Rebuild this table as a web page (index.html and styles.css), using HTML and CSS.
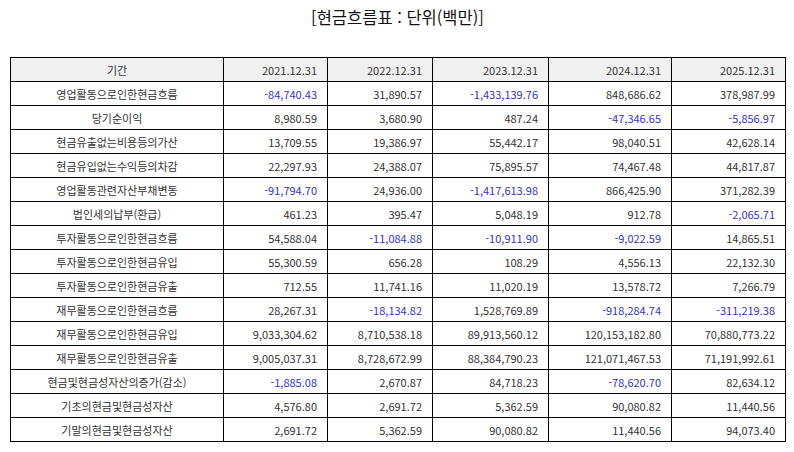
FILE: index.html
```html
<!DOCTYPE html>
<html lang="ko">
<head>
<meta charset="utf-8">
<title>현금흐름표</title>
<link rel="stylesheet" href="styles.css">
</head>
<body>
<div class="page">
  <h1 class="title">[현금흐름표 : 단위(백만)]</h1>
  <table class="cf">
    <colgroup>
      <col class="c0"><col class="c1"><col class="c2"><col class="c3"><col class="c4"><col class="c5">
    </colgroup>
    <thead>
      <tr><th class="label">기간</th><th>2021.12.31</th><th>2022.12.31</th><th>2023.12.31</th><th>2024.12.31</th><th>2025.12.31</th></tr>
    </thead>
    <tbody>
      <tr><td class="label">영업활동으로인한현금흐름</td><td class="neg">-84,740.43</td><td>31,890.57</td><td class="neg">-1,433,139.76</td><td>848,686.62</td><td>378,987.99</td></tr>
      <tr><td class="label">당기순이익</td><td>8,980.59</td><td>3,680.90</td><td>487.24</td><td class="neg">-47,346.65</td><td class="neg">-5,856.97</td></tr>
      <tr><td class="label">현금유출없는비용등의가산</td><td>13,709.55</td><td>19,386.97</td><td>55,442.17</td><td>98,040.51</td><td>42,628.14</td></tr>
      <tr><td class="label">현금유입없는수익등의차감</td><td>22,297.93</td><td>24,388.07</td><td>75,895.57</td><td>74,467.48</td><td>44,817.87</td></tr>
      <tr><td class="label">영업활동관련자산부채변동</td><td class="neg">-91,794.70</td><td>24,936.00</td><td class="neg">-1,417,613.98</td><td>866,425.90</td><td>371,282.39</td></tr>
      <tr><td class="label">법인세의납부(환급)</td><td>461.23</td><td>395.47</td><td>5,048.19</td><td>912.78</td><td class="neg">-2,065.71</td></tr>
      <tr><td class="label">투자활동으로인한현금흐름</td><td>54,588.04</td><td class="neg">-11,084.88</td><td class="neg">-10,911.90</td><td class="neg">-9,022.59</td><td>14,865.51</td></tr>
      <tr><td class="label">투자활동으로인한현금유입</td><td>55,300.59</td><td>656.28</td><td>108.29</td><td>4,556.13</td><td>22,132.30</td></tr>
      <tr><td class="label">투자활동으로인한현금유출</td><td>712.55</td><td>11,741.16</td><td>11,020.19</td><td>13,578.72</td><td>7,266.79</td></tr>
      <tr><td class="label">재무활동으로인한현금흐름</td><td>28,267.31</td><td class="neg">-18,134.82</td><td>1,528,769.89</td><td class="neg">-918,284.74</td><td class="neg">-311,219.38</td></tr>
      <tr><td class="label">재무활동으로인한현금유입</td><td>9,033,304.62</td><td>8,710,538.18</td><td>89,913,560.12</td><td>120,153,182.80</td><td>70,880,773.22</td></tr>
      <tr><td class="label">재무활동으로인한현금유출</td><td>9,005,037.31</td><td>8,728,672.99</td><td>88,384,790.23</td><td>121,071,467.53</td><td>71,191,992.61</td></tr>
      <tr><td class="label">현금및현금성자산의증가(감소)</td><td class="neg">-1,885.08</td><td>2,670.87</td><td>84,718.23</td><td class="neg">-78,620.70</td><td>82,634.12</td></tr>
      <tr><td class="label">기초의현금및현금성자산</td><td>4,576.80</td><td>2,691.72</td><td>5,362.59</td><td>90,080.82</td><td>11,440.56</td></tr>
      <tr><td class="label">기말의현금및현금성자산</td><td>2,691.72</td><td>5,362.59</td><td>90,080.82</td><td>11,440.56</td><td>94,073.40</td></tr>
    </tbody>
  </table>
</div>
</body>
</html>
```
FILE: styles.css
```css
html, body {
  margin: 0;
  padding: 0;
  background: #ffffff;
}
.page {
  padding: 7px 9px 0 10px;
  font-family: "Noto Sans CJK KR", "Noto Sans", sans-serif;
  color: #333333;
}
.title {
  margin: 0 0 29px 0;
  height: 21px;
  line-height: 21px;
  font-size: 16.5px;
  font-weight: normal;
  text-align: center;
  color: #111111;
}
.cf {
  width: 775px;
  border-collapse: collapse;
  table-layout: fixed;
  font-size: 11px;
}
.c0 { width: 213px; }
.c1 { width: 104px; }
.c2 { width: 105px; }
.c3 { width: 116px; }
.c4 { width: 123px; }
.c5 { width: 114px; }
.cf th, .cf td {
  border: 1px solid #000000;
  height: 23px;
  padding: 0 10px 0 4px;
  text-align: right;
  white-space: nowrap;
  line-height: 14px;
}
.cf th {
  font-weight: normal;
  background: #f0f0f0;
}
.cf .label {
  text-align: center;
  padding: 0 4px;
}
.cf .neg {
  color: #3333cc;
}
```
